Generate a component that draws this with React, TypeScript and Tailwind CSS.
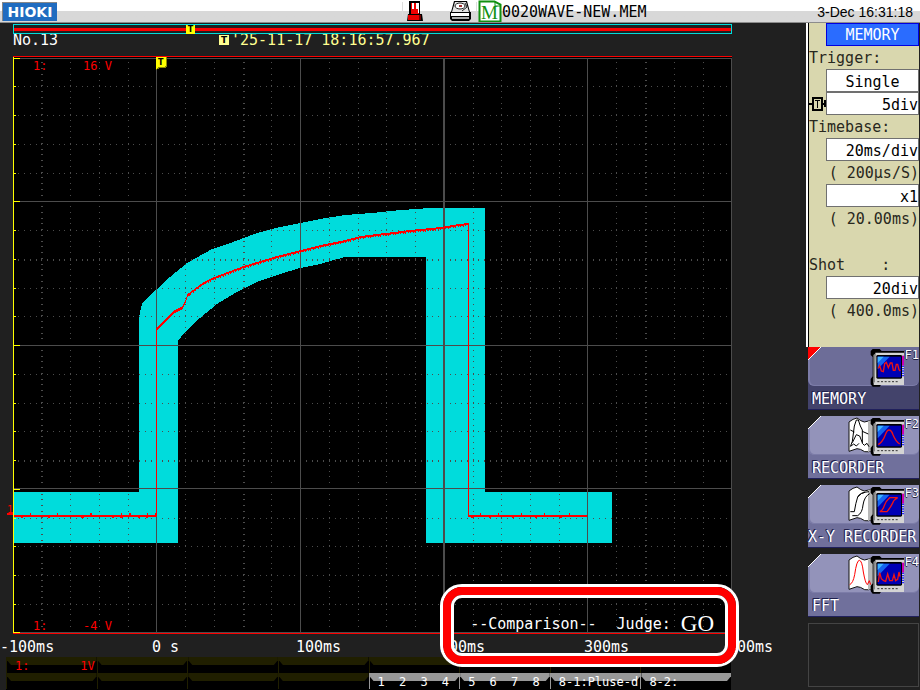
// App.tsx
import type { ReactNode } from "react";

type IconKind = "memory" | "recorder" | "xy" | "fft";

interface FunctionKey {
  id: string;
  label: string;
  icon: IconKind;
  active?: boolean;
}

const functionKeys: FunctionKey[] = [
  { id: "F1", label: "MEMORY", icon: "memory", active: true },
  { id: "F2", label: "RECORDER", icon: "recorder" },
  { id: "F3", label: "X-Y RECORDER", icon: "xy" },
  { id: "F4", label: "FFT", icon: "fft" },
];

const timeLabels = ["-100ms", "0 s", "100ms", "200ms", "300ms"];

// Plot area geometry
const LEFT = 13;
const TOP = 57;
const STEP = 28.75;
const DOT = 5.75;
const COLS = 25;
const ROWS = 20;

// Dotted minor divisions, one small square per dot
const buildDots = (): string => {
  let d = "";
  for (let c = 1; c < COLS; c++) {
    if (c % 5 === 0) continue;
    const x = Math.floor(LEFT + c * STEP);
    const w = c % 7 === 1 ? 2 : 1;
    for (let i = 1; i < ROWS * 5; i++) {
      if (i % 25 === 0) continue;
      d += `M${x} ${Math.floor(TOP + i * DOT)}h${w}v1h-${w}z`;
    }
  }
  for (let r = 1; r < ROWS; r++) {
    if (r % 5 === 0) continue;
    const y = Math.floor(TOP + 1 + r * STEP);
    const h = r % 7 === 0 ? 2 : 1;
    for (let i = 1; i < COLS * 5; i++) {
      if (i % 25 === 0) continue;
      d += `M${Math.floor(LEFT + i * DOT)} ${y}h1v${h}h-1z`;
    }
  }
  return d;
};

const dots = buildDots();

const TOLERANCE =
  "M13 492H139V317L142 304L148 297L157 289L170 277L187 263L212 249L233 242L257 233L280 227L300 223L320 219L345 215L372 213L390 211L415 209L430 208H485V492H612V543H426V257H345L320 264L300 268L280 274L257 282L237 292L217 304L200 318L185 332L178 341V543H13Z";

const trace: [number, number][] = [
  [157, 328], [165, 320], [173, 312], [182, 307], [185, 301], [187, 295],
  [195, 289], [203, 283], [214, 278], [227, 273], [243, 267], [263, 261],
  [280, 256], [300, 251], [320, 246], [340, 242], [360, 237], [385, 234],
  [410, 231], [440, 228], [458, 225], [469, 224],
];

// Sampled steps between the points, with a little measuring noise
const buildTrace = (): string => {
  let d = "";
  for (let i = 1; i < trace.length; i++) {
    const [x0, y0] = trace[i - 1];
    const [x1, y1] = trace[i];
    for (let x = x0; x < x1; x++) {
      const y = Math.round(y0 + ((y1 - y0) * (x - x0)) / (x1 - x0));
      const h = (x * 7) % 5 < 2 || x < 190 ? 3 : 2;
      d += `M${x} ${y - 1}h1v${h}h-1z`;
    }
  }
  return d;
};

const tracePath = buildTrace();

const noise = [30, 57, 90, 91, 121, 129, 130, 147, 155, 480, 498, 521, 544, 569];

function Waveform() {
  return (
    <svg
      viewBox="13 56 719 578"
      className="block h-auto w-full bg-black"
      shapeRendering="crispEdges"
      role="img"
      aria-label="Captured waveform with tolerance area"
    >
      <path d={TOLERANCE} fill="#00dcdc" />
      <path d={dots} fill="#4c4c4c" />
      <g fill="#4c4c4c">
        <rect x="156" y="58" width="1" height="575" />
        <rect x="300" y="58" width="1" height="575" />
        <rect x="443" y="58" width="2" height="575" />
        <rect x="587" y="58" width="1" height="575" />
        <rect x="731" y="58" width="1" height="575" />
        <rect x="13" y="58" width="719" height="1" />
        <rect x="13" y="201" width="719" height="1" />
        <rect x="13" y="345" width="719" height="1" />
        <rect x="13" y="488" width="719" height="1" />
        <rect x="13" y="632" width="719" height="1" />
      </g>
      <rect x="13" y="56" width="719" height="1" fill="red" />
      <rect x="13" y="633" width="719" height="1" fill="red" />

      {/* Left axis */}
      <rect x="13" y="57" width="1" height="576" fill="yellow" />
      {Array.from({ length: ROWS + 1 }, (_, i) => (
        <rect
          key={i}
          x="13"
          y={i === ROWS ? 632 : Math.floor(58 + i * STEP)}
          width={i % 5 === 0 ? 7 : 3}
          height="1"
          fill="yellow"
        />
      ))}

      {/* Measured signal */}
      <g fill="red">
        <rect x="14" y="515" width="143" height="2" />
        <rect x="156" y="328" width="1" height="188" />
        <rect x="468" y="224" width="1" height="293" />
        <rect x="468" y="515" width="119" height="2" />
        {noise.map((x) => (
          <rect key={x} x={x} y="513" width="1" height="2" />
        ))}
        {noise.map((x) => (
          <rect key={x} x={x - 9} y="517" width="2" height="1" />
        ))}
        <path d={tracePath} />
      </g>

      {/* Trigger flag */}
      <path d="M156 57h11v9l-2 2h-5l-4 2z" fill="#8c8c00" />
      <path d="M156 57h10v8l-2 2h-5l-3 2z" fill="#ffff00" />
      <text x="158" y="65" fontSize="8" className="font-['DejaVu_Sans'] font-bold">
        T
      </text>
    </svg>
  );
}

const screenCurves: Record<IconKind, string> = {
  memory:
    "M236 100L240 92L245 108L251 110L255 86L260 82L266 98L272 84L277 84L281 106L286 106L290 88L294 88L298 104L302 108",
  recorder: "M236 122Q250 112 257 92Q262 78 268 78Q275 78 280 92Q288 112 300 120",
  xy: "M240 116H262Q272 104 278 92Q282 80 294 74H270Q258 84 254 98Q250 112 240 116",
  fft: "M236 120L240 92L245 110L252 116L258 118L264 96L270 116L278 116L283 98L288 116L294 112L298 90L301 104",
};

const paperCurves: Partial<Record<IconKind, ReactNode>> = {
  recorder: (
    <path
      d="M152 128L158 112L164 66L170 48L176 48L182 66L188 78V118L194 124L202 118L208 128M152 78L164 84M188 82L206 90M154 126L162 120L170 126L178 118M158 116L170 92L180 96L188 116"
      stroke="#000"
    />
  ),
  xy: (
    <path
      d="M152 116H164Q168 90 174 72Q180 58 208 56M158 128H174Q188 120 190 96Q194 70 210 62M174 72Q186 58 196 58"
      stroke="#000"
    />
  ),
  fft: (
    <path
      d="M150 128Q160 124 165 98Q171 55 179 55Q187 55 191 90Q197 124 203 128L209 116L213 128"
      stroke="red"
    />
  ),
};

function ScreenIcon({ kind }: { kind: IconKind }) {
  return (
    <svg viewBox="145 36 168 120" className="block h-10 w-14" aria-hidden="true" fill="none">
      {kind !== "memory" && (
        <>
          <path
            d="M148 54Q160 44 172 42Q184 52 194 54Q205 52 222 46V138Q205 146 195 143Q182 134 172 134Q160 138 148 142Z"
            fill="#fff"
            stroke="#111"
            strokeWidth="3"
          />
          <path d="M205 52L222 46V138L205 144Z" fill="#b8b8b8" />
          <g strokeWidth="3">{paperCurves[kind]}</g>
        </>
      )}
      <path d="M219 42H240L246 48H313V56H230V148L240 150L246 147L240 155H219L213 148V132L219 124V66L213 60V48Z" fill="#000" />
      <path d="M227 53H313V150H222V130L226 124Z" fill="#d4d4d4" />
      <path d="M221 60L226 56V140L221 146Z" fill="#888" />
      <rect x="230" y="60" width="77" height="71" rx="4" fill="#000" />
      <rect x="234" y="65" width="70" height="62" fill="#0000b4" />
      <path d="M234 65H270L234 103Z" fill="#1464f0" />
      <path d="M234 65H252L234 84Z" fill="#3cb4ff" />
      <rect x="307" y="62" width="6" height="30" fill="#c800b4" />
      <path d="M307 94h6M307 101h6M307 108h6M307 115h6M307 122h6" stroke="#2828ff" strokeWidth="4" />
      <path d="M233 140h66" stroke="#333" strokeWidth="3" strokeDasharray="6 5" />
      <path d={screenCurves[kind]} stroke="#f01414" strokeWidth="4" />
    </svg>
  );
}

function KeyButton({ item }: { item: FunctionKey }) {
  const tone = item.active ? "bg-[#43436b]" : "bg-[#70709c]";
  const panel = item.active ? "bg-[#6d6d98]" : "bg-[#9393ba]";
  return (
    <button
      type="button"
      className={`relative block h-[63px] w-full border-b border-[#20205c] text-left ${tone}`}
    >
      <span className={`flex h-[39px] justify-end rounded-b-md border-b border-l-2 border-[#7c7ca8] pr-[15px] ${panel}`}>
        <ScreenIcon kind={item.icon} />
      </span>
      <span
        className={`block whitespace-nowrap text-[15px] leading-[26px] text-white [text-shadow:-1px_0_#20204c,-1px_-1px_#20204c] ${
          item.label.length > 10 ? "pl-0" : "pl-1"
        }`}
      >
        {item.label}
      </span>
      <span className="absolute right-0 top-0 text-xs leading-4 text-white [text-shadow:-1px_0_#202040,0_1px_#202040]">
        {item.id}
      </span>
      <svg viewBox="0 0 13 13" className="absolute left-0 top-0 size-[13px]" aria-hidden="true">
        <path d="M0 0H13L0 13Z" fill={item.active ? "#ff0000" : "#202020"} />
        <path d="M13 0L0 13" stroke="#fff" />
      </svg>
    </button>
  );
}

interface FieldProps {
  label: string;
  value: string;
  centered?: boolean;
}

function Field({ label, value, centered }: FieldProps) {
  return (
    <input
      aria-label={label}
      defaultValue={value}
      className={`block h-[23px] w-full min-w-0 border border-[#707070] bg-white pt-0.5 text-[15px] text-black ${
        centered ? "text-center" : "text-right"
      }`}
    />
  );
}

function Note({ children }: { children?: ReactNode }) {
  return <p className="h-[23px] whitespace-pre leading-[25px]">{children}</p>;
}

function Settings() {
  return (
    <section className="h-[324px] border-l-2 border-white bg-[#d9d7ae] text-[15px] text-[#282820]">
      <div className="h-full border-l border-black">
        <button type="button" className="ml-[17px] block h-[23px] w-[93px] border border-[#0000e0] bg-[#2a6cff] leading-[23px] text-white">
          MEMORY
        </button>
        <Note>Trigger:</Note>
        <div className="pl-[17px]">
          <Field label="Trigger mode" value="Single" centered />
        </div>
        <div className="flex">
          <svg viewBox="0 0 17 23" className="h-[23px] w-[17px] shrink-0" aria-hidden="true">
            <path d="M0 12h4M13 12h4M16 8v7" stroke="#000" strokeWidth="2" />
            <rect x="4" y="6" width="9" height="12" fill="none" stroke="#000" strokeWidth="2" />
            <path d="M6 8.500h5M8.500 8v8" stroke="#000" />
          </svg>
          <Field label="Pre-trigger" value="5div" />
        </div>
        <Note>Timebase:</Note>
        <div className="pl-[17px]">
          <Field label="Timebase" value="20ms/div" />
        </div>
        <div className="flex justify-end">
          <Note>( 200μs/S)</Note>
        </div>
        <div className="pl-[17px]">
          <Field label="Magnification" value="x1" />
        </div>
        <div className="flex justify-end">
          <Note>( 20.00ms)</Note>
        </div>
        <Note />
        <Note>Shot    :</Note>
        <div className="pl-[17px]">
          <Field label="Shot length" value="20div" />
        </div>
        <div className="flex justify-end">
          <Note>( 400.0ms)</Note>
        </div>
      </div>
    </section>
  );
}

function StatusBar() {
  return (
    <header className="flex h-[23px] items-center border-b border-[#8c8c8c] bg-linear-to-b from-white from-50% to-[#d8d8d8] to-50% text-black">
      <div className="w-[400px] pl-0.5">
        <div className="h-[19px] w-[55px] border-l border-t border-[#888] bg-[#206cc0] text-center font-['DejaVu_Sans',sans-serif] text-sm font-bold leading-[18px] text-white">
          HIOKI
        </div>
      </div>
      <svg viewBox="400 0 102 22" className="h-[22px] w-[102px] shrink-0" aria-hidden="true">
        <path d="M402.500 2v14M476.500 2v14" stroke="#ddd" />
        {/* USB memory */}
        <path d="M409 1h11v13h2l1 7h-16l1-7h1z" fill="#000" />
        <path d="M411 3h8v11h-8z" fill="#f00000" />
        <path d="M412 3h2v6h-2zM416 3h2v6h-2z" fill="#fff" />
        <path d="M418 3h1v10h-1z" fill="#fff" />
        <path d="M408 15h13v5h-13z" fill="#e80000" />
        <path d="M419 15h2v5h-2z" fill="#700000" />
        {/* Disk drive */}
        <path d="M454 1h13l3 11h1v7l-2 2h-17l-2-2v-7h1z" fill="#000" />
        <path d="M455 2h11l3 10h-17z" fill="#e4e4e4" />
        <ellipse cx="460" cy="6" rx="5" ry="3" fill="#fff" stroke="#222" />
        <path d="M459 5h3v2h-3z" fill="#a03030" />
        <path d="M465 3l2 4-5 4" fill="none" stroke="#222" />
        <path d="M451 13h18v3h-18z" fill="#fff" />
        <path d="M452 17h17v2h-17z" fill="#aaa" />
        {/* Memory file */}
        <path d="M479.500 1.500h15l6 3v17h-21z" fill="#fff" stroke="#109010" strokeWidth="2" />
        <path d="M495 2v4h5" fill="none" stroke="#109010" />
        <text x="481" y="19" fontSize="19" fill="#109010" className="font-['Liberation_Serif']">
          M
        </text>
      </svg>
      <h1 className="whitespace-nowrap pt-0.5 text-[15px]">0020WAVE-NEW.MEM</h1>
      <time className="ml-auto whitespace-nowrap pr-[7px] pt-0.5 font-['Liberation_Sans',sans-serif] text-sm">
        3-Dec 16:31:18
      </time>
    </header>
  );
}

interface TabProps {
  light?: boolean;
  children?: ReactNode;
}

function Tab({ light, children }: TabProps) {
  return (
    <div className={`h-4 border-l bg-black ${light ? "border-[#989898] text-white" : "border-[#201f00] text-[#ff0000]"}`}>
      <div
        className={`h-2 [clip-path:polygon(0_0,100%_0,100%_40%,calc(100%-4px)_100%,4px_100%,0_40%)] ${
          light ? "bg-[#989898]" : "bg-[#201f00]"
        }`}
      />
      {children && (
        <div className="relative -mt-2 flex justify-between whitespace-nowrap pl-2 pr-2.5 leading-[18px]">{children}</div>
      )}
    </div>
  );
}

// Strip of channel tabs under the time axis
function ChannelTabs() {
  const pages = ["1 2 3 4", "5 6 7 8"];
  return (
    <div className="ml-1.5 mr-[75px] text-xs">
      <div className="grid grid-cols-8">
        <Tab>
          <span>1:</span>
          <span className="-mr-2">1V</span>
        </Tab>
        {Array.from({ length: 7 }, (_, i) => (
          <Tab key={i} />
        ))}
      </div>
      <div className="grid grid-cols-8 bg-black pb-px">
        {Array.from({ length: 4 }, (_, i) => (
          <Tab key={i} />
        ))}
        {pages.map((page) => (
          <Tab key={page} light>
            {page.split(" ").map((n) => (
              <span key={n}>{n}</span>
            ))}
          </Tab>
        ))}
        <Tab light>8-1:Pluse-d</Tab>
        <Tab light>8-2:</Tab>
      </div>
    </div>
  );
}

export default function App() {
  return (
    <div className="min-h-screen bg-[#202020] font-['DejaVu_Sans_Mono',monospace] text-[15px] text-white">
      <StatusBar />
      <div className="flex">
        <main className="min-w-0 flex-1 pt-px">
          {/* Recording position */}
          <div className="relative ml-[13px] mr-[74px] h-2.5 border border-[#00dcdc] bg-[#202020] py-[3px]">
            <div className="h-[3px] bg-[#ff0000]" />
            <span className="absolute left-[24%] top-0 size-[9px] bg-[#ffff00] text-center font-['DejaVu_Sans',sans-serif] text-[8px] font-bold leading-[10px] text-black">
              T
            </span>
          </div>
          <div className="mr-[74px] flex h-[22px] pl-[13px] text-[15px] leading-3">
            <span className="w-[206px]">No.13</span>
            <span className="flex text-[#ffff90]">
              <span className="mr-0.5 mt-px size-2.5 bg-[#ffff90] text-center font-['DejaVu_Sans',sans-serif] text-[9px] font-bold leading-[10px] text-black">
                T
              </span>
              '25-11-17 18:16:57.967
            </span>
          </div>

          <div className="relative z-10 ml-[13px] mr-[74px]">
            <Waveform />
            <div className="absolute left-5 top-0.5 flex text-xs text-[#ff0000]">
              <span className="w-[50px]">1:</span>
              <span>16 V</span>
            </div>
            <div className="absolute bottom-0 left-5 flex text-xs text-[#ff0000]">
              <span className="w-[50px]">1:</span>
              <span>-4 V</span>
            </div>
            <span className="absolute -left-1.5 top-[449px] h-2.5 w-1.5 border-b-2 border-[#ff0000] text-[10px] leading-[9px] text-[#ff0000]">
              1
            </span>
            <output className="absolute bottom-0 right-[18px] flex items-center whitespace-pre leading-5">
              <span className="mr-5">--Comparison--</span>
              <span className="mr-2.5">Judge:</span>
              <span className="font-['Liberation_Serif',serif] text-[23px]">GO</span>
            </output>
            {/* Highlight frame around the verdict */}
            <div className="absolute -bottom-[33px] -right-[7px] h-[83px] w-[299px] rounded-[22px] border-[3px] border-white">
              <div className="h-full rounded-[19px] border-8 border-[#ff0000]">
                <div className="h-full rounded-[11px] border-[3px] border-white" />
              </div>
            </div>
          </div>

          {/* Time axis */}
          <div className="ml-2 flex h-[23px] whitespace-nowrap leading-[26px]">
            {timeLabels.map((label, i) => (
              <span key={label} className={`min-w-0 flex-1 ${i === 0 ? "-ml-2 mr-2" : ""}`}>
                {label}
              </span>
            ))}
            <span className="w-[78px]">400ms</span>
          </div>
          <ChannelTabs />
        </main>

        <aside className="w-[114px] shrink-0 pr-px">
          <Settings />
          <nav className="flex flex-col gap-1.5 pl-0.5">
            {functionKeys.map((item) => (
              <KeyButton key={item.id} item={item} />
            ))}
            <div className="h-16 border border-[#444]" />
          </nav>
        </aside>
      </div>
    </div>
  );
}
